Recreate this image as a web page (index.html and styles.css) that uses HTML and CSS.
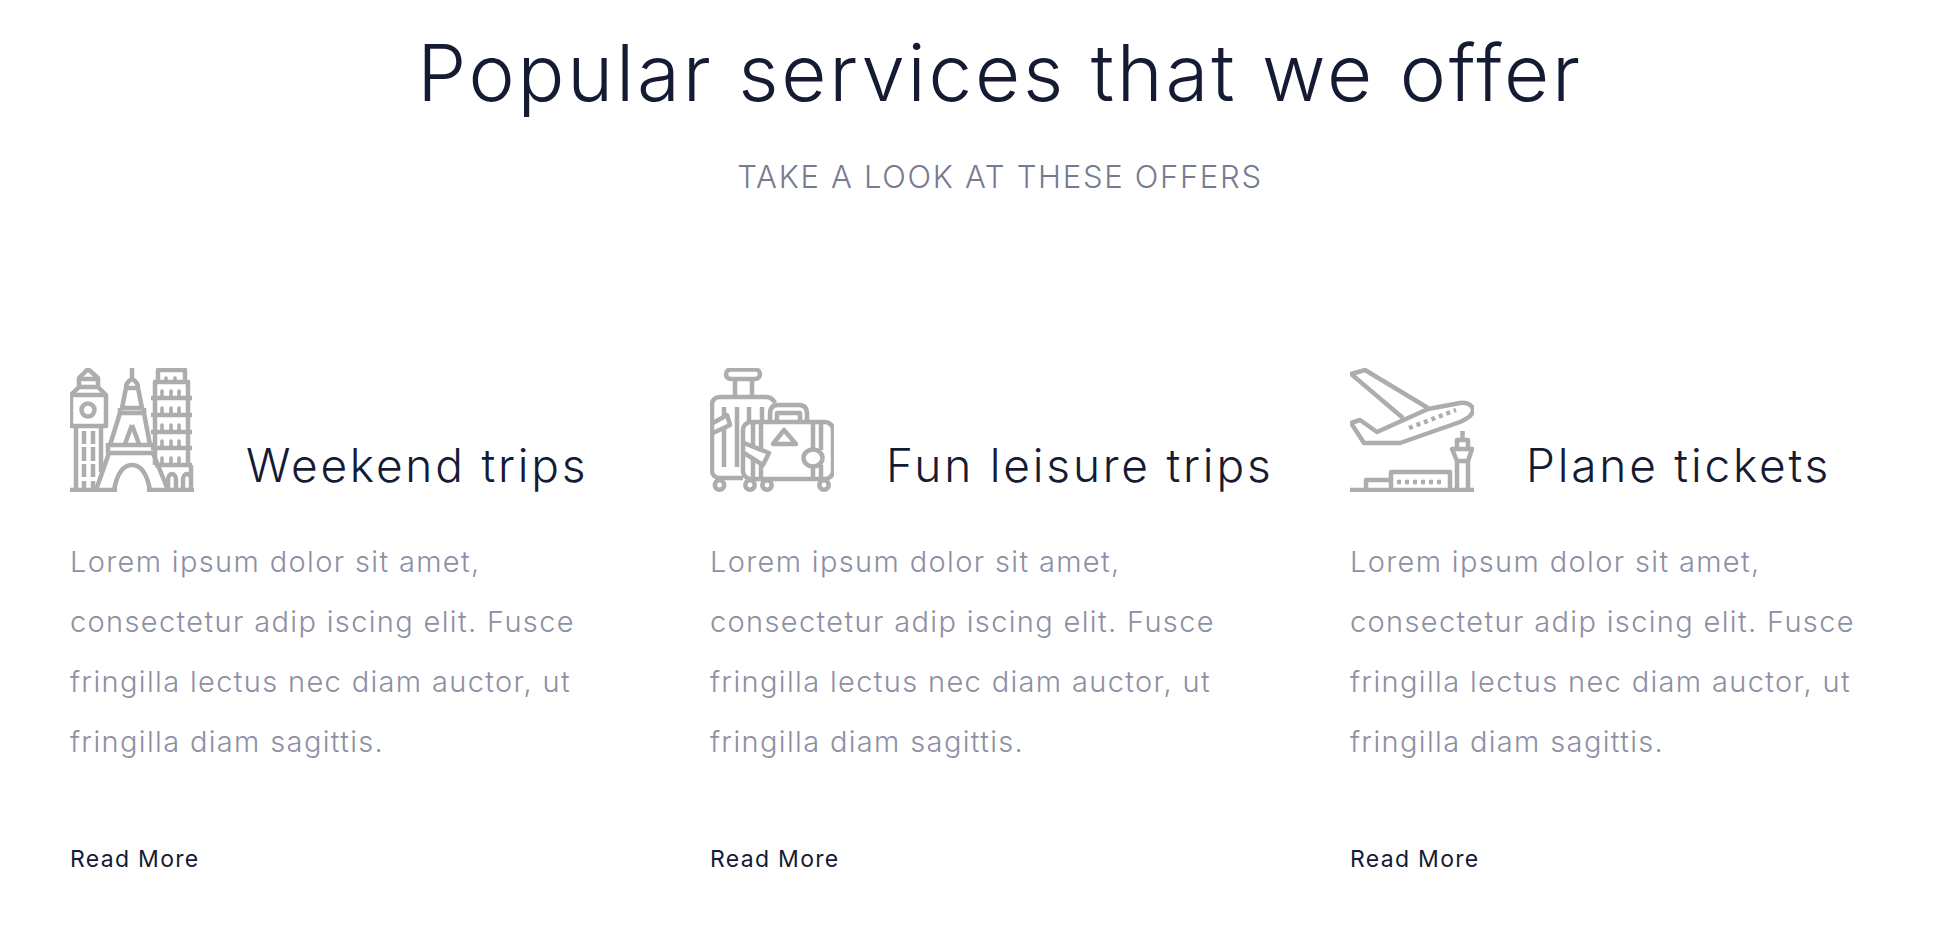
FILE: index.html
```html
<!DOCTYPE html>
<html lang="en">
<head>
<meta charset="utf-8">
<title>Popular services</title>
<link rel="stylesheet" href="styles.css">
</head>
<body>
<section class="services">
  <header class="intro">
    <h1 class="intro-title">Popular services that we offer</h1>
    <p class="intro-sub">TAKE A LOOK AT THESE OFFERS</p>
  </header>
  <div class="cards">
    <article class="card">
      <div class="card-head">
        <svg class="icon" viewBox="0 0 124 124" aria-hidden="true">
          <path d="M0 122H47M77 122H124"/>
          <path d="M1 58V27L9 19V10L18 1L28 10V19L36 27V58ZM9 19H28M9 11H28M1 27H36M6 58V122M31 58V104"/>
          <circle cx="18" cy="42" r="6.5"/>
          <path d="M14 63V76M23 63V76M14 79V93M23 79V93M14 96V109M23 96V109M14 113V122M23 113V122"/>
          <path d="M62 0V11M62 11C58 13 56 16 56 20L52 40H72L68 20C68 16 66 13 62 11ZM56 20H68M50 40V45H74V40M50 45L40 77M74 45L80 77M38 75V85H83M38 77H84M62 57L55 76M62 57L69 76"/>
          <path d="M39 85L26 122M83 85L98 122M44 122C47 106 53 97 62 97C71 97 77 106 80 122"/>
          <path d="M88 13V2H115V13M83 14H120M81 30H122M81 47H122M81 64H122M81 80H122M85 97H122M85 14V97M118 14V97M121 97V122M98 122V112C98 104 106 104 106 112V122M113 122V112C113 104 121 104 121 112"/>
          <path class="win" d="M96 13V10M105 13V10M92 29V23M101 29V23M109 29V23M92 46V40M101 46V40M109 46V40M92 63V57M101 63V57M109 63V57M92 79V73M101 79V73M109 79V73M92 96V90M101 96V90M109 96V90"/>
        </svg>
        <h2 class="card-title">Weekend trips</h2>
      </div>
      <p class="card-text">Lorem ipsum dolor sit amet, consectetur adip iscing elit. Fusce fringilla lectus nec diam auctor, ut fringilla diam sagittis.</p>
      <a class="card-link" href="#">Read More</a>
    </article>
    <article class="card">
      <div class="card-head">
        <svg class="icon" viewBox="0 0 124 124" aria-hidden="true">
          <rect x="16" y="1.500" width="34" height="9.500" rx="4.700"/>
          <path d="M25 11V29M42 11V29"/>
          <path d="M33 110H10C5 110 2 107 2 102V37C2 32 5 29 10 29H56C60 29 63 31 65 35"/>
          <path d="M14 39V48M14 60V99M27 39V99M39 39V53M52 39V53M43 54V78M51 54V81M43 92V110M51 96V110"/>
          <path d="M3 55L17 47L20 57L3 65"/>
          <rect x="33" y="54" width="90" height="57" rx="8"/>
          <path d="M60 54V46C60 40 63 37 68 37H89C94 37 97 40 97 46V54M67 54V45H90V54"/>
          <path d="M74 62L63 76H86Z"/>
          <path d="M34 75L59 85L53 97L34 85"/>
          <path d="M103 54V81M111 54V82M103 99V111M111 97V111"/>
          <ellipse cx="103" cy="90" rx="9.500" ry="8.500"/>
          <circle cx="9.500" cy="117" r="4.700"/>
          <circle cx="40" cy="117" r="4.700"/>
          <circle cx="57" cy="117" r="4.700"/>
          <circle cx="114" cy="117" r="4.700"/>
        </svg>
        <h2 class="card-title">Fun leisure trips</h2>
      </div>
      <p class="card-text">Lorem ipsum dolor sit amet, consectetur adip iscing elit. Fusce fringilla lectus nec diam auctor, ut fringilla diam sagittis.</p>
      <a class="card-link" href="#">Read More</a>
    </article>
    <article class="card">
      <div class="card-head">
        <svg class="icon" viewBox="0 0 124 124" aria-hidden="true">
          <path d="M53 50L1 6L15 2L78 40"/>
          <path d="M1 55L10 52L27 64L78 41L110 35C118 34 123 38 123 42C123 47 117 51 110 54L50 75H14Z"/>
          <path class="dash" d="M59 60L106 42"/>
          <path d="M0 122H124"/>
          <path d="M16 122V112H41M41 122V104H100V122"/>
          <path class="dash" d="M47 114H93"/>
          <path d="M107 122V93M118 122V93M102 81H122L118 93H107ZM107 81V72H118V81M112.500 72V63"/>
        </svg>
        <h2 class="card-title">Plane tickets</h2>
      </div>
      <p class="card-text">Lorem ipsum dolor sit amet, consectetur adip iscing elit. Fusce fringilla lectus nec diam auctor, ut fringilla diam sagittis.</p>
      <a class="card-link" href="#">Read More</a>
    </article>
  </div>
</section>
</body>
</html>
```
FILE: styles.css
```css
* { box-sizing: border-box; }
html, body { margin: 0; background: #fff; }
body { font-family: Inter, "Noto Sans", sans-serif; overflow: hidden; }
.services { width: 1960px; height: 938px; padding: 28px 0 0 40px; }
.intro { text-align: center; }
.intro-title {
  margin: 0;
  font-size: 78px;
  line-height: 90px;
  font-weight: 300;
  letter-spacing: 2.8px;
  color: #141b33;
}
.intro-sub {
  margin: 37px 0 0;
  font-size: 31px;
  line-height: 44px;
  font-weight: 300;
  letter-spacing: 1.7px;
  color: #777b92;
}
.cards { display: flex; margin-top: 169px; }
.card { flex: none; width: 640px; padding: 0 30px; }
.card-head { display: flex; align-items: flex-end; gap: 52px; }
.icon {
  width: 124px;
  height: 124px;
  flex: none;
  fill: none;
  stroke: #adadad;
  stroke-width: 4.5;
  stroke-linejoin: round;
}
.icon .dash { stroke-dasharray: 4 4; }
.icon .win { stroke-linecap: round; stroke-width: 3.6; }
.card-title {
  margin: -2px 0 2px;
  font-size: 46px;
  line-height: 50px;
  font-weight: 300;
  letter-spacing: 2.8px;
  white-space: nowrap;
  color: #141b33;
}
.card-text {
  width: 540px;
  margin: 40px 0 0;
  font-size: 29px;
  line-height: 60px;
  font-weight: 300;
  letter-spacing: 1.35px;
  color: #8e8fa3;
}
.card-link {
  display: block;
  margin-top: 71px;
  font-size: 23px;
  line-height: 32px;
  font-weight: 400;
  letter-spacing: 1.3px;
  color: #141b33;
  text-decoration: none;
}
```
